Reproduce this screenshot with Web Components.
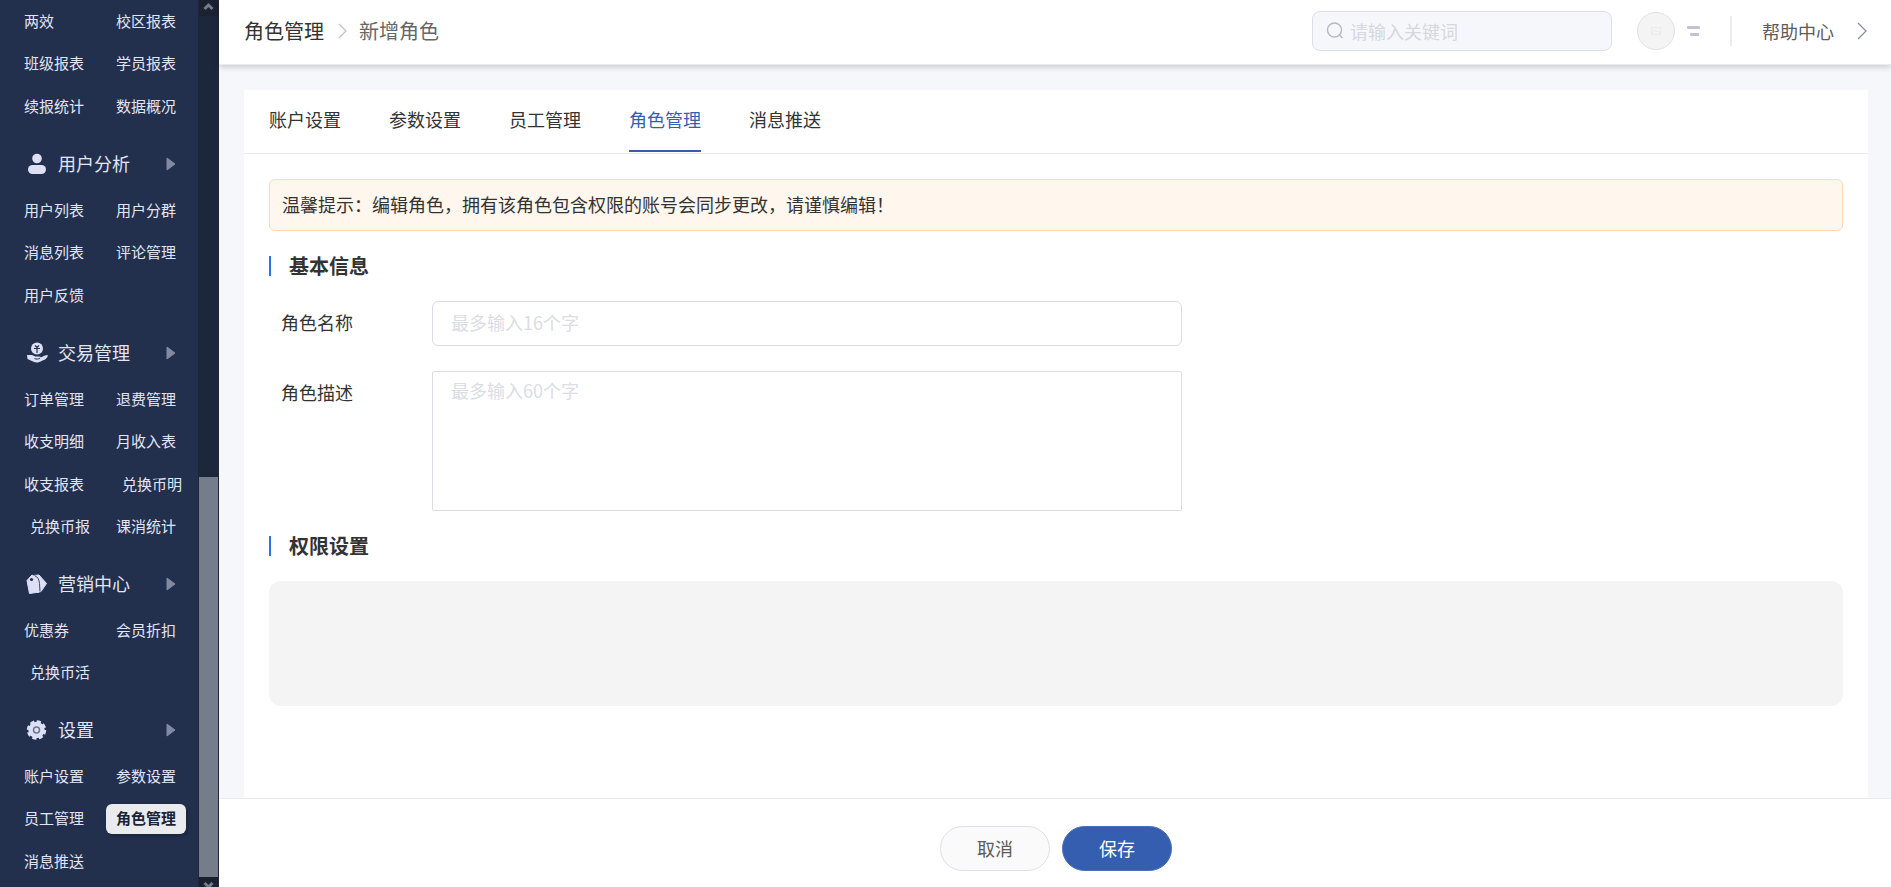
<!DOCTYPE html>
<html lang="zh-CN">
<head>
<meta charset="utf-8">
<title>角色管理</title>
<style>
html,body{margin:0;height:100%}
body{font-family:"Noto Sans CJK SC",sans-serif;font-size:18px;color:#333;background:#f5f7fb;overflow:hidden}
</style>
</head>
<body>
<admin-app></admin-app>
<script>
const define = (name, html, setup) => customElements.define(name, class extends HTMLElement {
  connectedCallback() {
    if (this.shadowRoot) return;
    this.attachShadow({ mode: 'open' }).innerHTML = html;
    if (setup) setup(this, this.shadowRoot);
  }
});

define('nav-item', `<style>
:host{display:block}
a{display:block;width:max-content;box-sizing:border-box;min-width:80px;height:30px;padding:0 10px;border-radius:6px;font-size:15px;line-height:28px;color:#e2e5f5;text-decoration:none;white-space:nowrap}
:host([indent]) a{padding-left:16px;padding-right:4px}
:host([active]) a{background:#e9ebee;color:#1b2334;font-weight:700;box-shadow:2px 2px 4px rgba(0,0,0,.25)}
</style><a href="#"><slot></slot></a>`);

define('nav-group', `<style>
:host{display:block}
h2{display:flex;align-items:center;box-sizing:border-box;height:61px;margin:0;padding:11px 22px 0 26px;font-size:18px;font-weight:400;color:#e2e5f5}
.icon{display:flex;width:22px;height:22px;margin-right:10px}
.title{flex:1;line-height:24px;padding-bottom:2px}
:host([plain]) h2{display:none}
.items{display:grid;grid-template-columns:92px 92px;grid-auto-rows:43px 42px;align-items:center;padding-left:14px}
</style>
<h2><span class="icon"><slot name="icon"></slot></span><span class="title"></span>
<svg width="10" height="14" viewBox="0 0 10 14"><path d="M1 1v12l8-6z" fill="#8289a2" stroke="#8289a2" stroke-linejoin="round"/></svg></h2>
<div class="items"><slot></slot></div>`, (el, root) => {
  root.querySelector('.title').textContent = el.getAttribute('label') || '';
});

define('scroll-rail', `<style>
:host{display:flex;flex-direction:column;box-sizing:border-box;width:21px;padding:0 1px;background:#1d273b}
.end{display:flex;justify-content:center;height:16px;background:#1b2130;overflow:hidden;flex:none}
.end.down{height:10px;align-items:flex-start}
.track{flex:461}
.thumb{flex:400;background:#757c8a}
</style>
<div class="end"><svg width="19" height="16" viewBox="0 0 19 16"><path d="M5.500 9l4-4 4 4" fill="none" stroke="#757c8a" stroke-width="3"/></svg></div>
<div class="track"></div><div class="thumb"></div>
<div class="end down"><svg width="19" height="16" viewBox="0 0 19 16"><path d="M5.500 6l4 4 4-4" fill="none" stroke="#757c8a" stroke-width="3"/></svg></div>`);

define('side-nav', `<style>
:host{display:flex;background:#22304e;overflow:hidden}
nav{width:198px}
</style>
<nav>
<nav-group plain>
<nav-item>两效</nav-item><nav-item>校区报表</nav-item><nav-item>班级报表</nav-item><nav-item>学员报表</nav-item><nav-item>续报统计</nav-item><nav-item>数据概况</nav-item>
</nav-group>
<nav-group label="用户分析">
<svg slot="icon" width="22" height="22" viewBox="0 0 22 22" fill="#dde0f4"><circle cx="11" cy="5.500" r="4.800"/><rect x="2" y="12" width="18" height="9" rx="4.500"/></svg>
<nav-item>用户列表</nav-item><nav-item>用户分群</nav-item><nav-item>消息列表</nav-item><nav-item>评论管理</nav-item><nav-item>用户反馈</nav-item>
</nav-group>
<nav-group label="交易管理">
<svg slot="icon" width="22" height="22" viewBox="0 0 22 22"><circle cx="11" cy="6.500" r="6" fill="#dde0f4"/><path d="M9 3.500l2 2 2-2M8 6.500h6M11 5.500V11" fill="none" stroke="#22304e" stroke-width="1.200"/><path d="M1 13h4c1.500 0 2.500.5 4 1.500h4.500c1.500 0 1.500 1.500 0 1.500l5.500-2.500 2.500-.5c.5.500.3 1.500-.5 2.500-1.500 2-3 2.500-5.500 3.500-3 1.800-5.500 2-8.500.5L1.500 17z" fill="#dde0f4"/><path d="M8.500 16.500c2 1 3.500.8 5.500-.5" fill="none" stroke="#22304e"/></svg>
<nav-item>订单管理</nav-item><nav-item>退费管理</nav-item><nav-item>收支明细</nav-item><nav-item>月收入表</nav-item><nav-item>收支报表</nav-item><nav-item indent>兑换币明</nav-item><nav-item indent>兑换币报</nav-item><nav-item>课消统计</nav-item>
</nav-group>
<nav-group label="营销中心">
<svg slot="icon" width="22" height="22" viewBox="0 0 22 22" stroke-linejoin="round"><path d="M8 2.500l5-.5 7.500 8.500-5.500 8-4 1z" fill="#dde0f4" stroke="#dde0f4"/><path d="M1 7.500l5-5.500 5 3 2 14-9.500 1.500z" fill="#dde0f4" stroke="#dde0f4"/><path d="M8.500 2.500c3.500 1.500 4.500 4 5 8l.5 8" fill="none" stroke="#3c4966"/><circle cx="5.500" cy="6.500" r="1.600" fill="#22304e"/></svg>
<nav-item>优惠券</nav-item><nav-item>会员折扣</nav-item><nav-item indent>兑换币活</nav-item>
</nav-group>
<nav-group label="设置">
<svg slot="icon" width="22" height="22" viewBox="0 0 22 22"><circle cx="10.500" cy="11" r="8.200" fill="#dde0f4"/><circle cx="10.500" cy="11" r="8.500" fill="none" stroke="#dde0f4" stroke-width="2.500" stroke-dasharray="4.200 2.476"/><circle cx="10.500" cy="11" r="3" fill="#dde0f4" stroke="#6d7690" stroke-width="1.500"/></svg>
<nav-item>账户设置</nav-item><nav-item>参数设置</nav-item><nav-item>员工管理</nav-item><nav-item active>角色管理</nav-item><nav-item>消息推送</nav-item>
</nav-group>
</nav>
<scroll-rail></scroll-rail>`);

define('top-bar', `<style>
:host{display:flex;align-items:center;box-sizing:border-box;height:65px;padding:0 24px 2px 25px;background:#fff;border-bottom:1px solid #e9ebef;box-shadow:0 2px 6px rgba(0,0,0,.18);position:relative;z-index:1}
ol{display:flex;align-items:center;margin:0;padding:0;list-style:none;font-size:20px;line-height:30px;flex:1}
.sep{display:flex;margin:0 12px 0 14px}
a{color:inherit;text-decoration:none}
.current{color:#666}
.search{display:flex;align-items:center;box-sizing:border-box;width:300px;height:40px;padding:0 13px;border:1px solid #dcdfe9;border-radius:8px;background:#f5f7fb}
input{flex:1;min-width:0;margin-left:6px;padding:0;border:0;outline:0;background:none;font:18px/26px "Noto Sans CJK SC",sans-serif}
input::placeholder{color:#d6d8de}
.avatar{display:flex;align-items:center;justify-content:center;box-sizing:border-box;width:38px;height:38px;margin:0 12px 0 25px;padding:0;border:1px solid #e1e2ea;border-radius:50%;background:#f4f4f4}
.menu{padding:0;border:0;background:none;display:flex}
.line{width:2px;height:30px;margin:0 30px;background:#ebecee}
.help{display:flex;align-items:center;gap:23px;color:#5c5c5c;line-height:26px}
</style>
<ol><li><a href="#">角色管理</a></li><li class="sep"><svg width="9" height="16" viewBox="0 0 9 16"><path d="M1 1l7 7-7 7" fill="none" stroke="#c0c1d0" stroke-width="1.300"/></svg></li><li class="current">新增角色</li></ol>
<label class="search"><svg width="18" height="18" viewBox="0 0 18 18" fill="none" stroke="#b4b8c4" stroke-width="1.400"><circle cx="8.500" cy="8" r="7"/><path d="M13 12.500l3.500 3.500"/></svg><input type="search" placeholder="请输入关键词" aria-label="搜索"></label>
<button class="avatar" aria-label="头像"><svg width="10" height="8" viewBox="0 0 10 8" fill="none" stroke="#ececec"><rect x=".5" y=".5" width="9" height="7"/><path d="M1 6l3-3 2 2 1-1 2 2"/></svg></button>
<button class="menu" aria-label="菜单"><svg width="13" height="10" viewBox="0 0 13 10" fill="#c2c2d4"><rect width="13" height="3" rx="1"/><rect x="3" y="7" width="9" height="3" rx="1"/></svg></button>
<span class="line"></span>
<a class="help" href="#">帮助中心<svg width="10" height="18" viewBox="0 0 10 18"><path d="M1 1l8 8-8 8" fill="none" stroke="#8a8fa3" stroke-width="1.300"/></svg></a>`);

define('tab-link', `<style>
:host{display:flex}
a{box-sizing:border-box;height:62px;line-height:58px;color:#333;text-decoration:none;border-bottom:2px solid transparent}
:host([active]) a{color:#355eb1;border-color:#355eb1}
</style><a href="#"><slot></slot></a>`);

define('section-title', `<style>
:host{display:flex;align-items:center}
h3{margin:0;font-size:20px;line-height:30px;font-weight:700}
i{width:2px;height:20px;margin-right:18px;background:#2a73e8}
</style><i></i><h3><slot></slot></h3>`);

define('form-field', `<style>
:host{display:grid;grid-template-columns:151px minmax(0,750px);padding-left:12px}
label{line-height:42px;font-size:18px}
input,textarea{display:block;box-sizing:border-box;width:100%;margin:0;border:1px solid #dcdce4;background:#fff;outline:0;font:18px/26px "Noto Sans CJK SC",sans-serif;color:#333;resize:none}
input{height:45px;padding:0 18px 3px;border-radius:6px}
textarea{height:140px;padding:5px 18px;border-radius:2px}
::placeholder{color:#dcdde4}
</style><label for="control"></label>`, (el, root) => {
  root.querySelector('label').textContent = el.getAttribute('label');
  const c = document.createElement(el.hasAttribute('multiline') ? 'textarea' : 'input');
  c.id = 'control';
  c.placeholder = el.getAttribute('hint');
  root.append(c);
});

define('pill-button', `<style>
:host{display:block}
button{box-sizing:border-box;width:110px;height:45px;padding:0 0 2px;border:1px solid #dfdfe8;border-radius:23px;background:#fafafa;color:#5c5c5c;font:18px/26px "Noto Sans CJK SC",sans-serif}
:host([primary]) button{background:#355eb1;border-color:#4a6fba;color:#fff}
</style><button type="button"><slot></slot></button>`);

define('role-editor', `<style>
:host{display:flex;flex-direction:column;flex:1;min-height:0}
.panel{flex:1;min-height:0;overflow:hidden;margin:25px 23px 0 25px;background:#fff}
.tabs{display:flex;gap:48px;padding:0 25px 1px;border-bottom:1px solid #ebecee}
.body{padding:25px}
.tip{box-sizing:border-box;height:52px;margin:0 0 20px;padding:0 12px;border:1px solid #fbdcb0;border-radius:6px;background:#fff6ed;line-height:48px}
section-title,form-field{margin-bottom:20px}
form-field{margin-bottom:25px}
form-field[multiline]{margin-bottom:20px}
.rights{height:125px;border-radius:12px;background:#f4f4f4}
footer{display:flex;align-items:center;justify-content:center;gap:12px;box-sizing:border-box;height:89px;padding:11px 0 0 2px;border-top:1px solid #ebecee;background:#fff}
</style>
<main class="panel">
<nav class="tabs"><tab-link>账户设置</tab-link><tab-link>参数设置</tab-link><tab-link>员工管理</tab-link><tab-link active>角色管理</tab-link><tab-link>消息推送</tab-link></nav>
<div class="body">
<p class="tip">温馨提示：编辑角色，拥有该角色包含权限的账号会同步更改，请谨慎编辑！</p>
<section-title>基本信息</section-title>
<form-field label="角色名称" hint="最多输入16个字"></form-field>
<form-field multiline label="角色描述" hint="最多输入60个字"></form-field>
<section-title>权限设置</section-title>
<div class="rights"></div>
</div>
</main>
<footer><pill-button>取消</pill-button><pill-button primary>保存</pill-button></footer>`);

define('admin-app', `<style>
:host{display:grid;grid-template-columns:219px minmax(0,1fr);height:100vh;overflow:hidden}
.page{display:flex;flex-direction:column;min-height:0;min-width:0}
</style>
<side-nav></side-nav>
<div class="page"><top-bar></top-bar><role-editor></role-editor></div>`);
</script>
</body>
</html>
